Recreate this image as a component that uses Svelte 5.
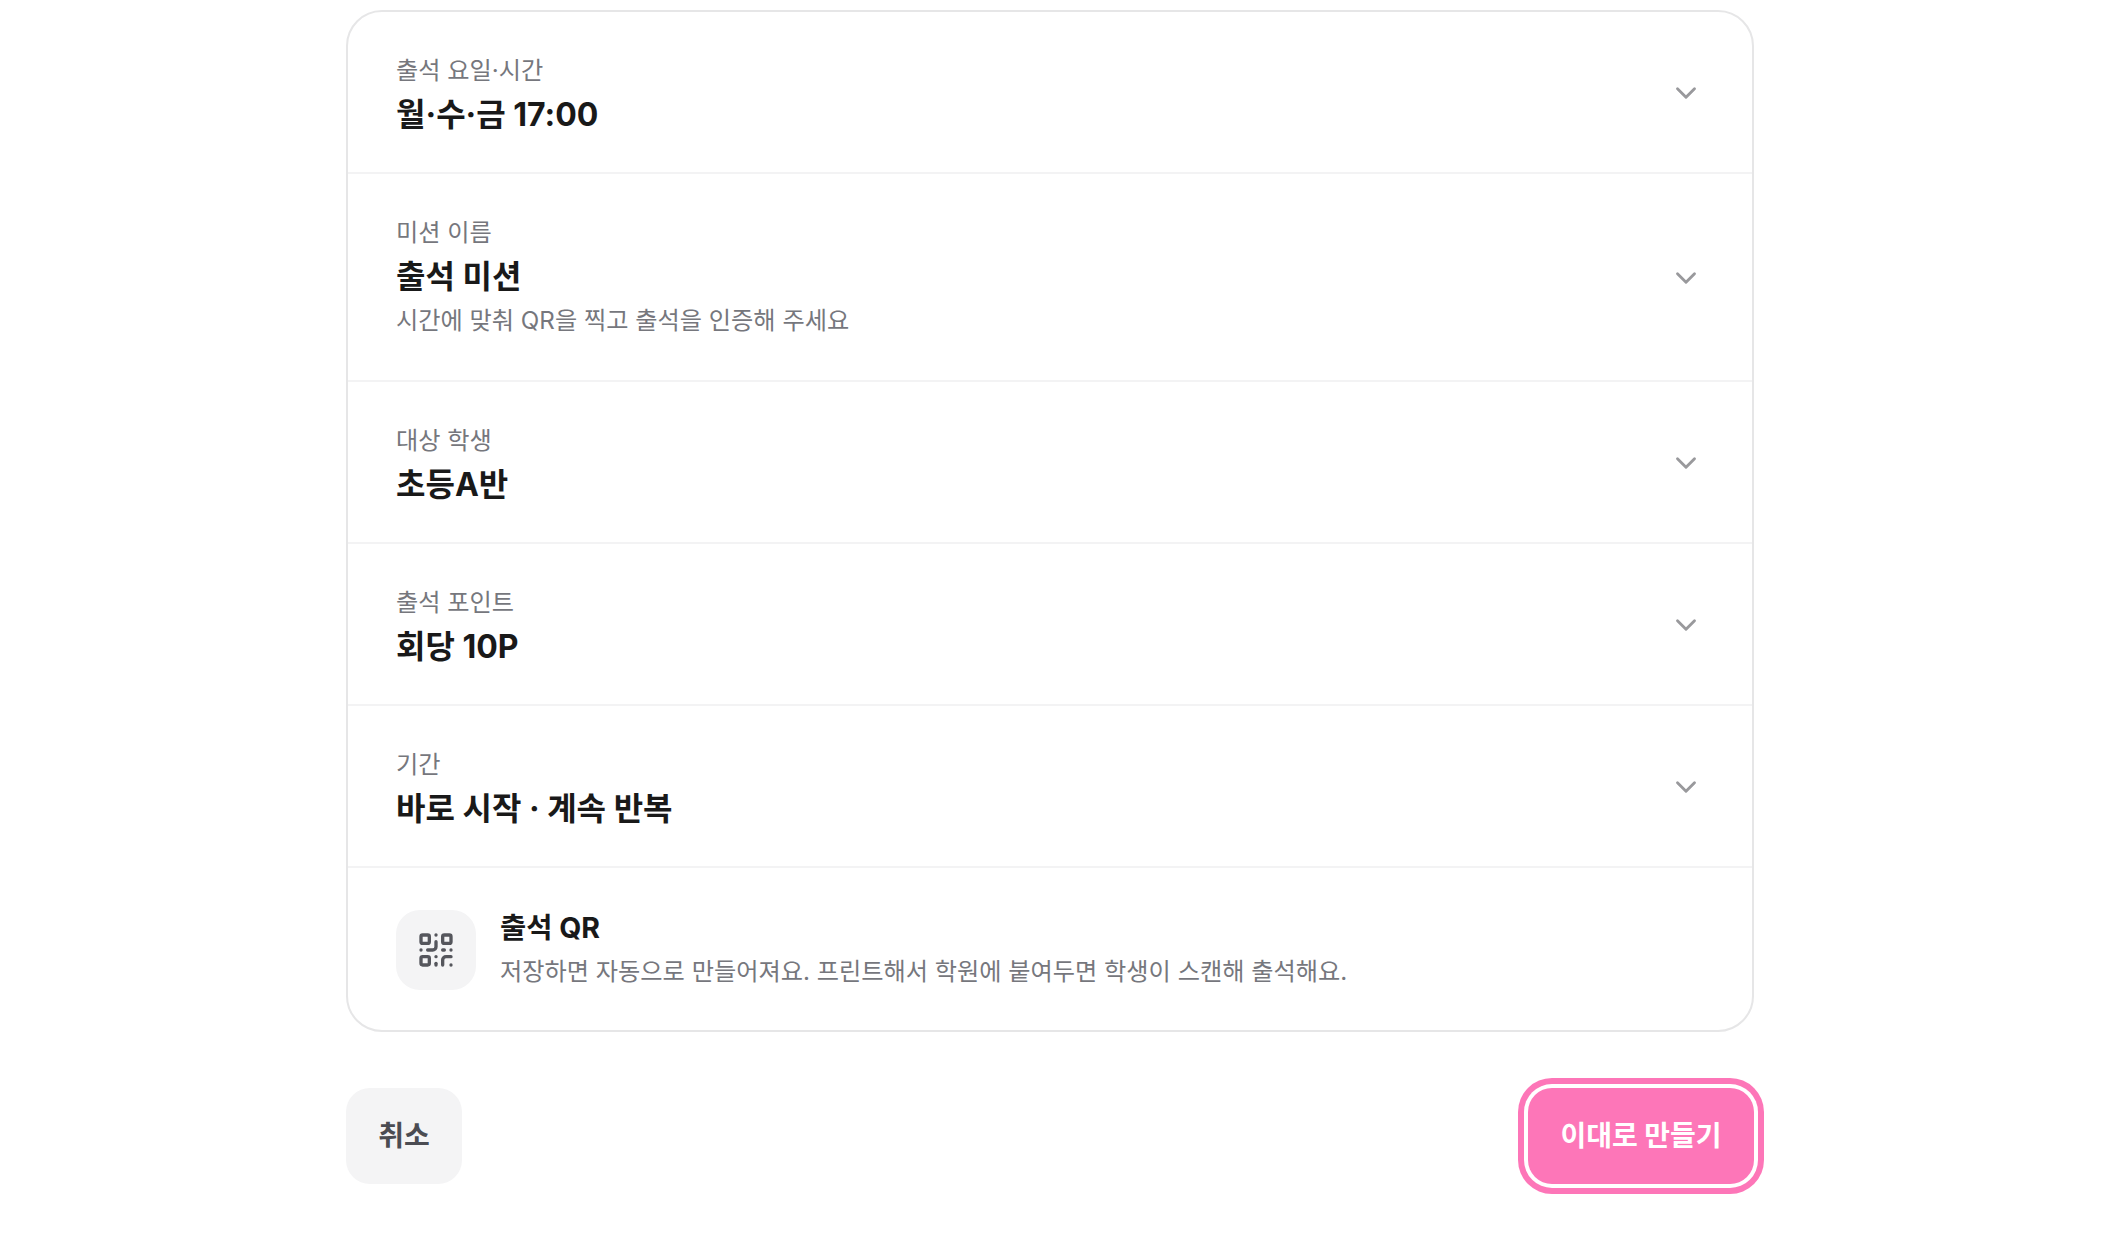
<script>
  const rows = [
    { label: '출석 요일·시간', value: '월·수·금 17:00' },
    { label: '미션 이름', value: '출석 미션', hint: '시간에 맞춰 QR을 찍고 출석을 인증해 주세요' },
    { label: '대상 학생', value: '초등A반' },
    { label: '출석 포인트', value: '회당 10P' },
    { label: '기간', value: '바로 시작 · 계속 반복' }
  ];
</script>

<div class="page">
  <div class="card">
    {#each rows as row}
      <div class="row">
        <div class="text">
          <div class="label">{row.label}</div>
          <div class="value">{row.value}</div>
          {#if row.hint}
            <div class="hint">{row.hint}</div>
          {/if}
        </div>
        <svg class="chevron" viewBox="0 0 24 24" fill="none" stroke="#99999c" stroke-width="2" stroke-linecap="round" stroke-linejoin="round">
          <path d="m6 9 6 6 6-6" />
        </svg>
      </div>
    {/each}
    <div class="qr-row">
      <div class="qr-icon">
        <svg viewBox="0 0 24 24" fill="none" stroke="#55565c" stroke-width="2" stroke-linecap="round" stroke-linejoin="round">
          <rect x="3" y="3" width="5" height="5" rx="1" />
          <rect x="16" y="3" width="5" height="5" rx="1" />
          <rect x="3" y="16" width="5" height="5" rx="1" />
          <path d="M21 16h-3a2 2 0 0 0-2 2v3" />
          <path d="M21 21v.01" />
          <path d="M12 7v3a2 2 0 0 1-2 2H7" />
          <path d="M3 12h.01" />
          <path d="M12 3h.01" />
          <path d="M12 16v.01" />
          <path d="M16 12h1" />
          <path d="M21 12v.01" />
          <path d="M12 21v-1" />
        </svg>
      </div>
      <div class="qr-text">
        <div class="qr-title">출석 QR</div>
        <div class="qr-desc">저장하면 자동으로 만들어져요. 프린트해서 학원에 붙여두면 학생이 스캔해 출석해요.</div>
      </div>
    </div>
  </div>
  <div class="actions">
    <button class="cancel">취소</button>
    <button class="submit">이대로 만들기</button>
  </div>
</div>

<style>
  :global(body) {
    background: #fff;
  }
  .page {
    width: 1408px;
    margin-left: 346px;
    padding: 10px 0 52px;
    font-family: Inter, "Noto Sans CJK KR", "Noto Sans", sans-serif;
  }
  .card {
    border: 2px solid #e6e6e7;
    border-radius: 36px;
    overflow: hidden;
  }
  .row {
    display: flex;
    align-items: center;
    justify-content: space-between;
    padding: 42px 48px 34px;
    border-bottom: 2px solid #f3f3f4;
  }
  .text {
    display: flex;
    flex-direction: column;
  }
  .label {
    font-size: 24.2px;
    line-height: 34px;
    color: #76777d;
  }
  .value {
    margin-top: 4px;
    font-size: 32px;
    line-height: 46px;
    font-weight: 700;
    color: #191919;
  }
  .hint {
    font-size: 24.2px;
    line-height: 38px;
    color: #76777d;
    margin: 2px 0 6px;
  }
  .chevron {
    width: 34px;
    height: 34px;
    margin-top: -7px;
    margin-right: 1px;
  }
  .qr-row {
    display: flex;
    align-items: center;
    gap: 24px;
    padding: 42px 48px 40px;
  }
  .qr-icon {
    width: 80px;
    height: 80px;
    border-radius: 24px;
    background: #f4f4f5;
    display: flex;
    align-items: center;
    justify-content: center;
  }
  .qr-icon svg {
    width: 40px;
    height: 40px;
  }
  .qr-title {
    font-size: 28.5px;
    line-height: 36px;
    font-weight: 700;
    color: #191919;
  }
  .qr-desc {
    margin-top: 8px;
    font-size: 24.2px;
    line-height: 36px;
    color: #76777d;
  }
  .actions {
    display: flex;
    align-items: center;
    justify-content: space-between;
    margin-top: 56px;
  }
  button {
    font-family: inherit;
    border: none;
    height: 96px;
    padding: 0 0 5px;
    border-radius: 24px;
    font-size: 28px;
    font-weight: 700;
  }
  .cancel {
    width: 116px;
    background: #f4f4f5;
    color: #4b4c52;
  }
  .submit {
    width: 226px;
    background: #fd76b8;
    color: #fff;
    box-shadow: 0 0 0 4px #fff, 0 0 0 10px #fd76b8;
  }
</style>
